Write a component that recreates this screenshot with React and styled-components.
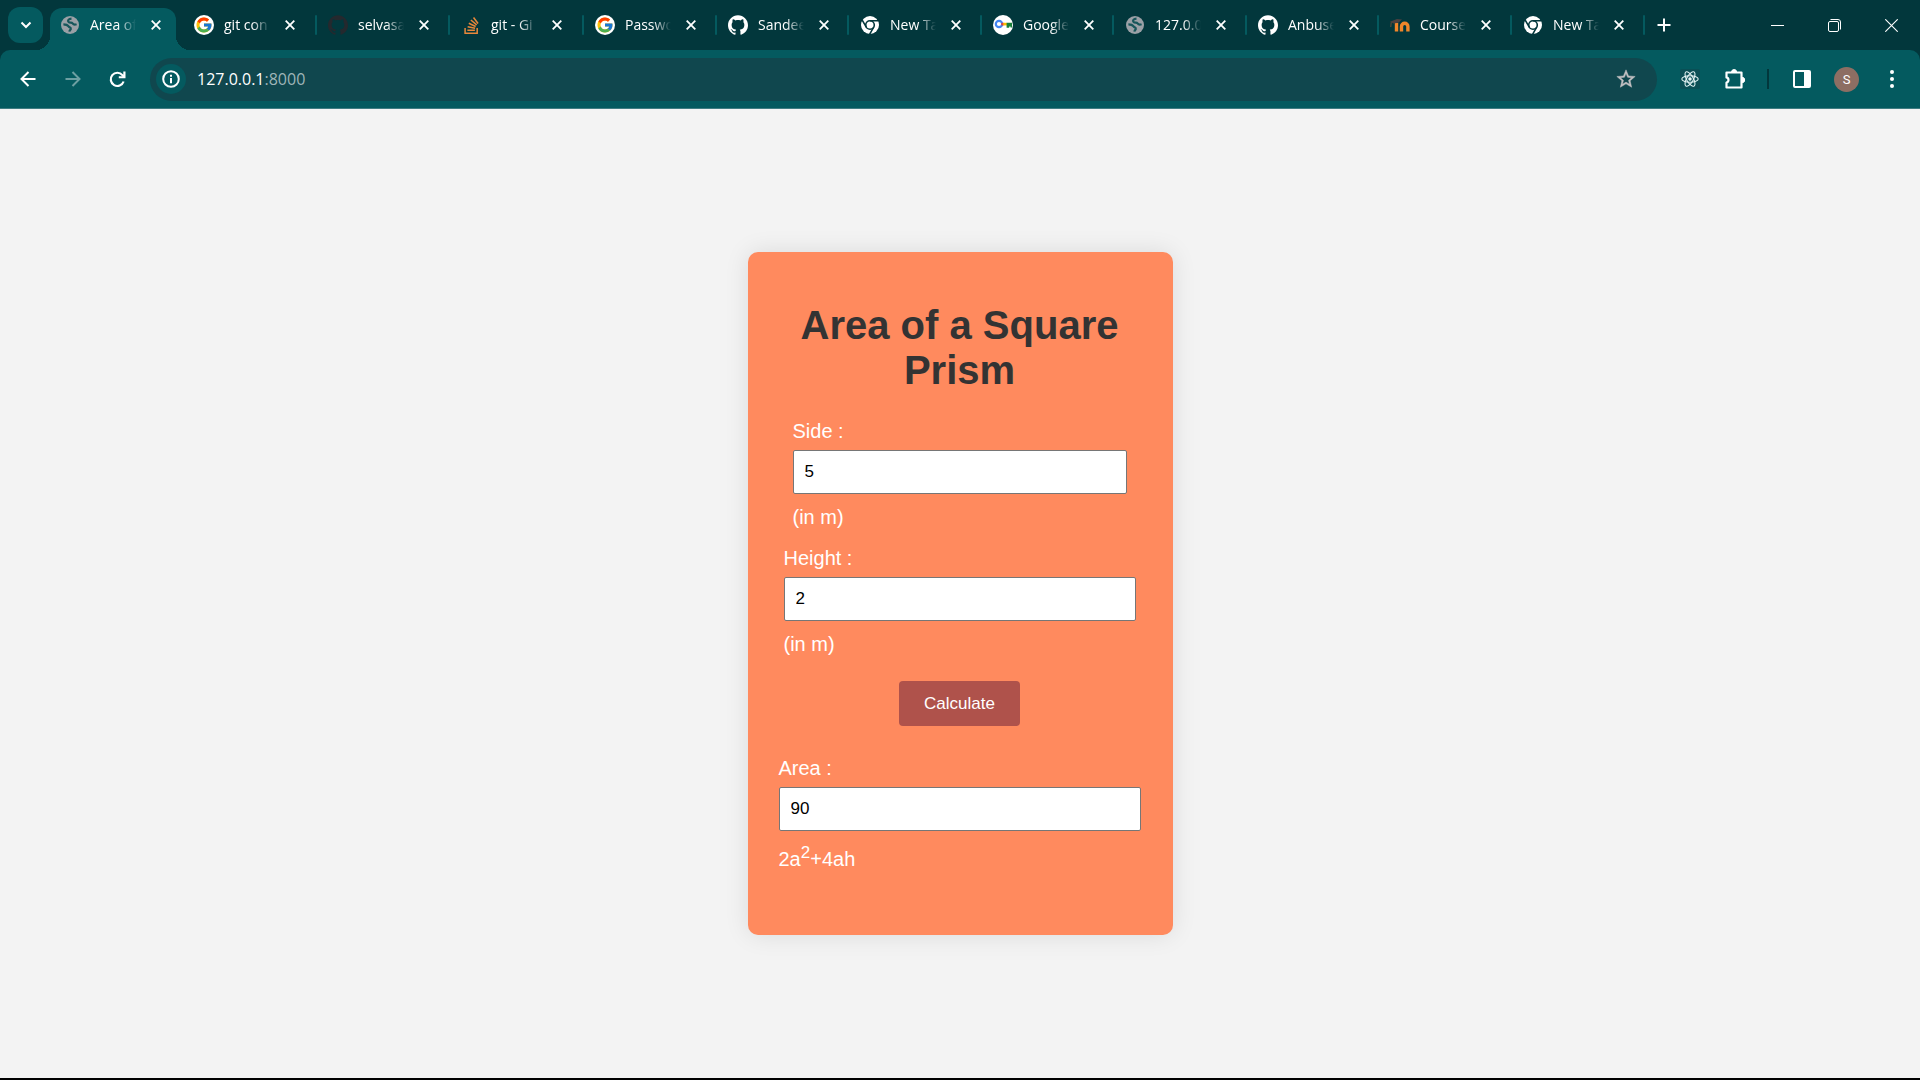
import React, { useState } from "react";
import styled, { createGlobalStyle, css } from "styled-components";
import { FcGoogle } from "react-icons/fc";
import { SiGithub, SiStackoverflow } from "react-icons/si";

const frame = "#02373c";
const toolbar = "#045a5f";
const uiFont = '"Open Sans", "Noto Sans", sans-serif';
const pageFont = '"Liberation Sans", Arial, sans-serif';

const GlobalStyle = createGlobalStyle`
  *, *::before, *::after { box-sizing: border-box; }
  body { margin: 0; background: #f3f3f3; }
  button { border: 0; padding: 0; background: none; color: inherit; font: inherit; cursor: pointer; }
  svg { display: block; flex: none; }
`;

const Window = styled.div`
  display: flex;
  flex-direction: column;
  min-height: 100vh;
  border-bottom: 2px solid #000;
`;

const Chrome = styled.header`
  background: ${frame};
  color: #fff;
  font-family: ${uiFont};
`;

const TabStrip = styled.div`
  display: flex;
  align-items: center;
  height: 50px;
  padding-left: 8px;
`;

const TabSearch = styled.button`
  display: grid;
  place-items: center;
  width: 35px;
  height: 36px;
  border-radius: 12px;
  background: ${toolbar};
`;

const TabList = styled.nav`
  display: flex;
  align-self: stretch;
  align-items: flex-end;
  margin-left: 7px;
`;

const Tab = styled.div`
  position: relative;
  display: flex;
  align-items: center;
  width: ${(p) => p.$width}px;
  height: 42px;
  padding: 0 10px 8px;

  ${(p) =>
    p.$separated &&
    css`
      &::after {
        content: "";
        position: absolute;
        top: 7px;
        right: 1px;
        width: 2px;
        height: 20px;
        border-radius: 1px;
        background: ${toolbar};
      }
    `}

  ${(p) =>
    p.$active &&
    css`
      margin-right: 8px;
      border-radius: 12px 12px 0 0;
      background: ${toolbar};

      &::before,
      &::after {
        content: "";
        position: absolute;
        bottom: 0;
        width: 14px;
        height: 14px;
      }
      &::before {
        right: 100%;
        background: radial-gradient(circle at 0 0, transparent 14px, ${toolbar} 14px);
      }
      &::after {
        left: 100%;
        background: radial-gradient(circle at 100% 0, transparent 14px, ${toolbar} 14px);
      }
    `}
`;

const Favicon = styled.span`
  display: grid;
  place-items: center;
  flex: none;
  width: 20px;
  height: 20px;
  border-radius: 50%;
  background: ${(p) => (p.$disc ? "#fff" : "transparent")};
`;

const TabTitle = styled.span`
  flex: none;
  width: 46px;
  margin: 0 12px 0 10px;
  font-size: 14px;
  line-height: 20px;
  white-space: nowrap;
  mask-image: linear-gradient(to right, #000 28px, transparent 46px);
`;

const CloseTab = styled.button`
  display: grid;
  place-items: center;
  flex: none;
  width: 16px;
  height: 20px;
`;

const NewTab = styled.button`
  display: grid;
  place-items: center;
  width: 36px;
  height: 36px;
`;

const WindowControls = styled.div`
  display: flex;
  align-self: stretch;
  margin-left: auto;
`;

const WindowButton = styled.button`
  display: grid;
  place-items: center;
  width: 57px;
  height: 50px;
`;

const Toolbar = styled.div`
  display: flex;
  align-items: center;
  height: 59px;
  padding: 0 6px 0 5px;
  border-radius: 10px 10px 0 0;
  border-bottom: 1px solid #3f7d82;
  background: ${toolbar};
`;

const ToolButton = styled.button`
  display: grid;
  place-items: center;
  flex: none;
  width: 45px;
  height: 44px;
  opacity: ${(p) => (p.disabled ? 0.42 : 1)};
`;

const AddressBar = styled.div`
  display: flex;
  flex: 1;
  align-items: center;
  min-width: 0;
  height: 43px;
  margin: 0 10px;
  padding: 0 20px 0 6px;
  border-radius: 22px;
  background: #10474e;
`;

const SiteInfo = styled.button`
  display: grid;
  place-items: center;
  flex: none;
  width: 30px;
  height: 30px;
  border-radius: 50%;
  background: ${toolbar};
`;

const Address = styled.div`
  flex: 1;
  margin-left: 11px;
  font-size: 16px;
  line-height: 24px;
  span { color: #9fb5b8; }
`;

const Divider = styled.span`
  width: 2px;
  height: 20px;
  margin: 0 10px;
  background: ${frame};
`;

const ExtensionTile = styled.span`
  display: grid;
  place-items: center;
  width: 20px;
  height: 20px;
  border-radius: 2px;
  background: #0a4f55;
`;

const Avatar = styled.span`
  display: grid;
  place-items: center;
  width: 25px;
  height: 25px;
  border-radius: 50%;
  background: #8d6e63;
  font: 13px/25px Roboto, sans-serif;
`;

const Page = styled.main`
  display: flex;
  flex: 1;
  align-items: center;
  justify-content: center;
  font-family: ${pageFont};
`;

const Card = styled.form`
  width: 100%;
  max-width: 425px;
  padding: 51px 32px 47px 31px;
  border-radius: 10px;
  background: #ff8a5e;
  box-shadow: 0 0 25px rgba(0, 0, 0, 0.1);
  color: #fff;
  font-size: 20px;
  line-height: 23px;
`;

const Title = styled.h1`
  margin: 0 0 27px;
  color: #333;
  font-size: 40px;
  line-height: 45px;
  text-align: center;
`;

const Field = styled.div`
  display: flex;
  flex-direction: column;
  margin-bottom: 18px;
  padding: 0 ${(p) => p.$inset || 0}px;
`;

const NumberInput = styled.input`
  width: 100%;
  height: 44px;
  margin: 7px 0 12px;
  padding: 0 11px;
  border: 1px solid #767676;
  border-radius: 2px;
  background: #fff;
  color: #000;
  font: 17px ${pageFont};
`;

const Actions = styled.div`
  display: flex;
  justify-content: center;
  margin: 25px 0 31px;
`;

const Calculate = styled.button`
  height: 45px;
  padding: 0 25px;
  border-radius: 4px;
  background: #af524b;
  font-size: 17px;
`;

const Formula = styled.span`
  sup { font-size: 17px; line-height: 20px; }
`;

const Globe = () => (
  <svg width="18" height="18" viewBox="0 0 18 18">
    <circle cx="9" cy="9" r="9" fill="#9aa0a6" />
    <path
      d="M10.500 2.600C7.500 2.800 6.200 4.600 7.600 6C8.800 7.200 10.600 6.200 11.600 7.400C12.400 8.600 14 8.800 15.600 8.200M2.400 8.400C5 8.400 6.600 9 7.600 10.400C8.200 11.400 10.200 11.400 9.800 13C9.400 14 8.600 14.200 8.400 15.600"
      fill="none"
      stroke="#17565b"
      strokeWidth="2.200"
    />
  </svg>
);

const ChromeMark = () => (
  <svg width="18" height="18" viewBox="0 0 18 18">
    <circle cx="9" cy="9" r="9" fill="#fff" />
    <circle cx="9" cy="9" r="4.300" fill="none" stroke={frame} strokeWidth="1.600" />
    <path
      d="M9 4.700H17.200M5.300 11.200L1.200 4.100M12.700 11.200L8.600 18.300"
      fill="none"
      stroke={frame}
      strokeWidth="1.600"
    />
  </svg>
);

const KeyMark = () => (
  <svg width="20" height="20" viewBox="0 0 20 20">
    <circle cx="6" cy="9" r="3.200" fill="none" stroke="#4285f4" strokeWidth="2.200" />
    <path d="M8.300 7.800h3v2.600h-3z" fill="#ea4335" />
    <path d="M10.300 7.800h3.700v2.600h-3.700z" fill="#fbbc04" />
    <path d="M13.600 7.800h5.400v4.600h-1.500v-1h-1.300v1.400h-2.600z" fill="#188038" />
  </svg>
);

const MoodleMark = () => (
  <svg width="20" height="20" viewBox="0 0 20 20">
    <path
      d="M6.500 16.500V8M11.500 16.500v-5a3.200 3.200 0 0 1 6.400 0v5"
      fill="none"
      stroke="#f0862a"
      strokeWidth="3.400"
    />
    <path d="M0 6.800L7 4l5 .5-3.600 3.300-5 .7z" fill="#4b4040" />
    <path d="M1.200 7.300L.8 12" stroke="#6a4d3b" strokeWidth="1" />
  </svg>
);

const Cross = () => (
  <svg width="10" height="10" viewBox="0 0 10 10">
    <path d="M.7.7l8.600 8.600M9.300.7L.7 9.300" stroke="#fff" strokeWidth="1.800" />
  </svg>
);

const StackMark = () => <SiStackoverflow size={17} color="#e8873a" />;
const GitHubLight = () => <SiGithub size={20} />;
const GitHubDark = () => <SiGithub size={20} color="#24292e" />;
const GoogleMark = () => <FcGoogle size={18} />;

const tabs = [
  { title: "Area of", Icon: Globe, width: 126, active: true },
  { title: "git con", Icon: GoogleMark, disc: true, width: 134 },
  { title: "selvasa", Icon: GitHubDark, width: 133 },
  { title: "git - Gi", Icon: StackMark, width: 134 },
  { title: "Passwo", Icon: GoogleMark, disc: true, width: 133 },
  { title: "Sandee", Icon: GitHubLight, width: 132 },
  { title: "New Ta", Icon: ChromeMark, width: 133 },
  { title: "Google", Icon: KeyMark, disc: true, width: 132 },
  { title: "127.0.0", Icon: Globe, width: 133 },
  { title: "Anbuse", Icon: GitHubLight, width: 132 },
  { title: "Course", Icon: MoodleMark, width: 133 },
  { title: "New Ta", Icon: ChromeMark, width: 133 },
];

function BrowserTabs() {
  return (
    <TabStrip>
      <TabSearch aria-label="Search tabs">
        <svg width="12" height="8" viewBox="0 0 12 8">
          <path d="M1.500 1.500L6 6l4.500-4.500" fill="none" stroke="#fff" strokeWidth="2" />
        </svg>
      </TabSearch>
      <TabList aria-label="Tabs">
        {tabs.map(({ title, Icon, disc, width, active }, i) => (
          <Tab key={i} $width={width} $active={active} $separated={!active}>
            <Favicon $disc={disc}>
              <Icon />
            </Favicon>
            <TabTitle>{title}</TabTitle>
            <CloseTab aria-label="Close tab">
              <Cross />
            </CloseTab>
          </Tab>
        ))}
      </TabList>
      <NewTab aria-label="New tab">
        <svg width="14" height="14" viewBox="0 0 14 14">
          <path d="M7 .5v13M.5 7h13" stroke="#fff" strokeWidth="2" />
        </svg>
      </NewTab>
      <WindowControls>
        <WindowButton aria-label="Minimize">
          <svg width="13" height="13" viewBox="0 0 13 13">
            <path d="M0 6.500h13" stroke="#fff" />
          </svg>
        </WindowButton>
        <WindowButton aria-label="Restore">
          <svg width="13" height="13" viewBox="0 0 13 13" fill="none" stroke="#fff">
            <rect x=".5" y="2.500" width="10" height="10" rx="1.500" />
            <path d="M2.500.500h7.500a2.500 2.500 0 0 1 2.500 2.500v7.500" />
          </svg>
        </WindowButton>
        <WindowButton aria-label="Close">
          <svg width="13" height="13" viewBox="0 0 13 13">
            <path d="M.3.300l12.400 12.400M12.700.300L.3 12.700" stroke="#fff" strokeWidth="1.100" />
          </svg>
        </WindowButton>
      </WindowControls>
    </TabStrip>
  );
}

function BrowserToolbar() {
  return (
    <Toolbar>
      <ToolButton aria-label="Back">
        <svg width="16" height="16" viewBox="0 0 16 16" fill="none" stroke="#fff" strokeWidth="2">
          <path d="M15.500 8H2M8.500 1L1.500 8l7 7" />
        </svg>
      </ToolButton>
      <ToolButton aria-label="Forward" disabled>
        <svg width="16" height="16" viewBox="0 0 16 16" fill="none" stroke="#fff" strokeWidth="2">
          <path d="M.5 8H14M7.500 1l7 7-7 7" />
        </svg>
      </ToolButton>
      <ToolButton aria-label="Reload">
        <svg width="17" height="17" viewBox="0 0 17 17">
          <path d="M14.600 10.500A6.600 6.600 0 1 1 13.400 4.100L15 5.700" fill="none" stroke="#fff" strokeWidth="2.200" />
          <path d="M16.500.500v6.700H9.800V5.200h4.500V.500z" fill="#fff" />
        </svg>
      </ToolButton>
      <AddressBar>
        <SiteInfo aria-label="View site information">
          <svg width="18" height="18" viewBox="0 0 18 18">
            <circle cx="9" cy="9" r="7.800" fill="none" stroke="#fff" strokeWidth="2" />
            <path d="M9 8v5.300M9 4.700v2" stroke="#fff" strokeWidth="2" />
          </svg>
        </SiteInfo>
        <Address>
          127.0.0.1<span>:8000</span>
        </Address>
        <button aria-label="Bookmark this tab">
          <svg width="22" height="22" viewBox="0 0 24 24">
            <path
              d="M22 9.240l-7.190-.62L12 2 9.190 8.630 2 9.240l5.460 4.730L5.820 21 12 17.270 18.180 21l-1.630-7.030L22 9.240zM12 15.400l-3.760 2.270 1-4.280-3.320-2.880 4.380-.38L12 6.100l1.710 4.040 4.380.38-3.320 2.880 1 4.280L12 15.400z"
              fill="#c3c1c3"
              stroke="#c3c1c3"
              strokeWidth=".5"
            />
          </svg>
        </button>
      </AddressBar>
      <ToolButton aria-label="React Developer Tools">
        <ExtensionTile>
          <svg width="18" height="18" viewBox="0 0 18 18" fill="none" stroke="#e3f3f3" strokeWidth="1.100">
            <ellipse cx="9" cy="9" rx="8.200" ry="3.300" />
            <ellipse cx="9" cy="9" rx="8.200" ry="3.300" transform="rotate(60 9 9)" />
            <ellipse cx="9" cy="9" rx="8.200" ry="3.300" transform="rotate(120 9 9)" />
            <circle cx="9" cy="9" r="1.200" fill="#fff" />
          </svg>
        </ExtensionTile>
      </ToolButton>
      <ToolButton aria-label="Extensions">
        <svg width="22" height="22" viewBox="0 0 22 22">
          <path
            d="M2.500 4.500H17.500V19.500H2.500V14.600A2.700 2.700 0 0 0 2.500 9.400Z"
            fill="none"
            stroke="#fff"
            strokeWidth="2.200"
            strokeLinejoin="round"
          />
          <path d="M7.600 4a2.500 2.500 0 0 1 5 0zM18 9.300a2.700 2.700 0 0 1 0 5.400z" fill="#fff" stroke="#fff" />
        </svg>
      </ToolButton>
      <Divider />
      <ToolButton aria-label="Side panel">
        <svg width="18" height="18" viewBox="0 0 18 18">
          <rect x="1" y="1" width="16" height="16" rx="1" fill="none" stroke="#fff" strokeWidth="2" />
          <path d="M11 1h6v16h-6z" fill="#fff" />
        </svg>
      </ToolButton>
      <ToolButton aria-label="Profile">
        <Avatar>S</Avatar>
      </ToolButton>
      <ToolButton aria-label="Menu">
        <svg width="4" height="18" viewBox="0 0 4 18" fill="#fff">
          <circle cx="2" cy="2" r="2" />
          <circle cx="2" cy="9" r="2" />
          <circle cx="2" cy="16" r="2" />
        </svg>
      </ToolButton>
    </Toolbar>
  );
}

export default function App() {
  const [side, setSide] = useState("5");
  const [height, setHeight] = useState("2");
  const [area, setArea] = useState("90");

  const calculate = (event) => {
    event.preventDefault();
    setArea(String(2 * side * side + 4 * side * height));
  };

  return (
    <Window>
      <GlobalStyle />
      <Chrome>
        <BrowserTabs />
        <BrowserToolbar />
      </Chrome>
      <Page>
        <Card onSubmit={calculate}>
          <Title>Area of a Square Prism</Title>
          <Field $inset={14}>
            <label htmlFor="side">Side :</label>
            <NumberInput id="side" value={side} onChange={(e) => setSide(e.target.value)} />
            <span>(in m)</span>
          </Field>
          <Field $inset={5}>
            <label htmlFor="height">Height :</label>
            <NumberInput id="height" value={height} onChange={(e) => setHeight(e.target.value)} />
            <span>(in m)</span>
          </Field>
          <Actions>
            <Calculate type="submit">Calculate</Calculate>
          </Actions>
          <Field>
            <label htmlFor="area">Area :</label>
            <NumberInput id="area" value={area} readOnly />
            <Formula>
              2a<sup>2</sup>+4ah
            </Formula>
          </Field>
        </Card>
      </Page>
    </Window>
  );
}
